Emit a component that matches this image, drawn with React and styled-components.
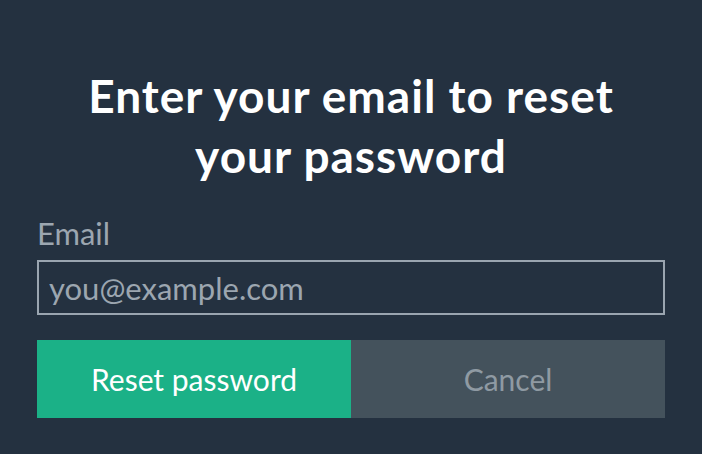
import styled, { createGlobalStyle } from 'styled-components';

const GlobalStyle = createGlobalStyle`
  html, body {
    margin: 0;
    padding: 0;
    background: #243140;
  }
  body {
    font-family: Lato, "Noto Sans", sans-serif;
  }
`;

const Page = styled.div`
  width: 702px;
  height: 454px;
  box-sizing: border-box;
  padding: 66px 37px 0;
  background: #243140;
`;

const Title = styled.h1`
  margin: 0 0 30px;
  text-align: center;
  color: #ffffff;
  font-size: 46px;
  font-weight: 700;
  letter-spacing: 1px;
  line-height: 60px;
`;

const Label = styled.label`
  display: block;
  color: #9ca6b0;
  font-size: 31px;
  line-height: 34px;
  margin-bottom: 10px;
`;

const Input = styled.input`
  display: block;
  width: 100%;
  height: 55px;
  box-sizing: border-box;
  margin: 0 0 25px;
  padding: 0 10px;
  border: 2px solid #9aa5b0;
  background: transparent;
  color: #ffffff;
  font-family: inherit;
  font-size: 31px;
  outline: none;

  &::placeholder {
    color: #9ca6b0;
  }
`;

const Actions = styled.div`
  display: grid;
  grid-template-columns: 1fr 1fr;
`;

const Button = styled.button`
  height: 78px;
  border: none;
  font-family: inherit;
  font-size: 30px;
  cursor: pointer;
  background: ${({ $primary }) => ($primary ? '#1bb187' : '#44525c')};
  color: ${({ $primary }) => ($primary ? '#ffffff' : '#8f9aa3')};
`;

export default function App() {
  return (
    <>
      <GlobalStyle />
      <Page>
        <Title>
          Enter your email to reset
          <br />
          your password
        </Title>
        <Label htmlFor="email">Email</Label>
        <Input id="email" type="email" placeholder="you@example.com" />
        <Actions>
          <Button $primary>Reset password</Button>
          <Button>Cancel</Button>
        </Actions>
      </Page>
    </>
  );
}
